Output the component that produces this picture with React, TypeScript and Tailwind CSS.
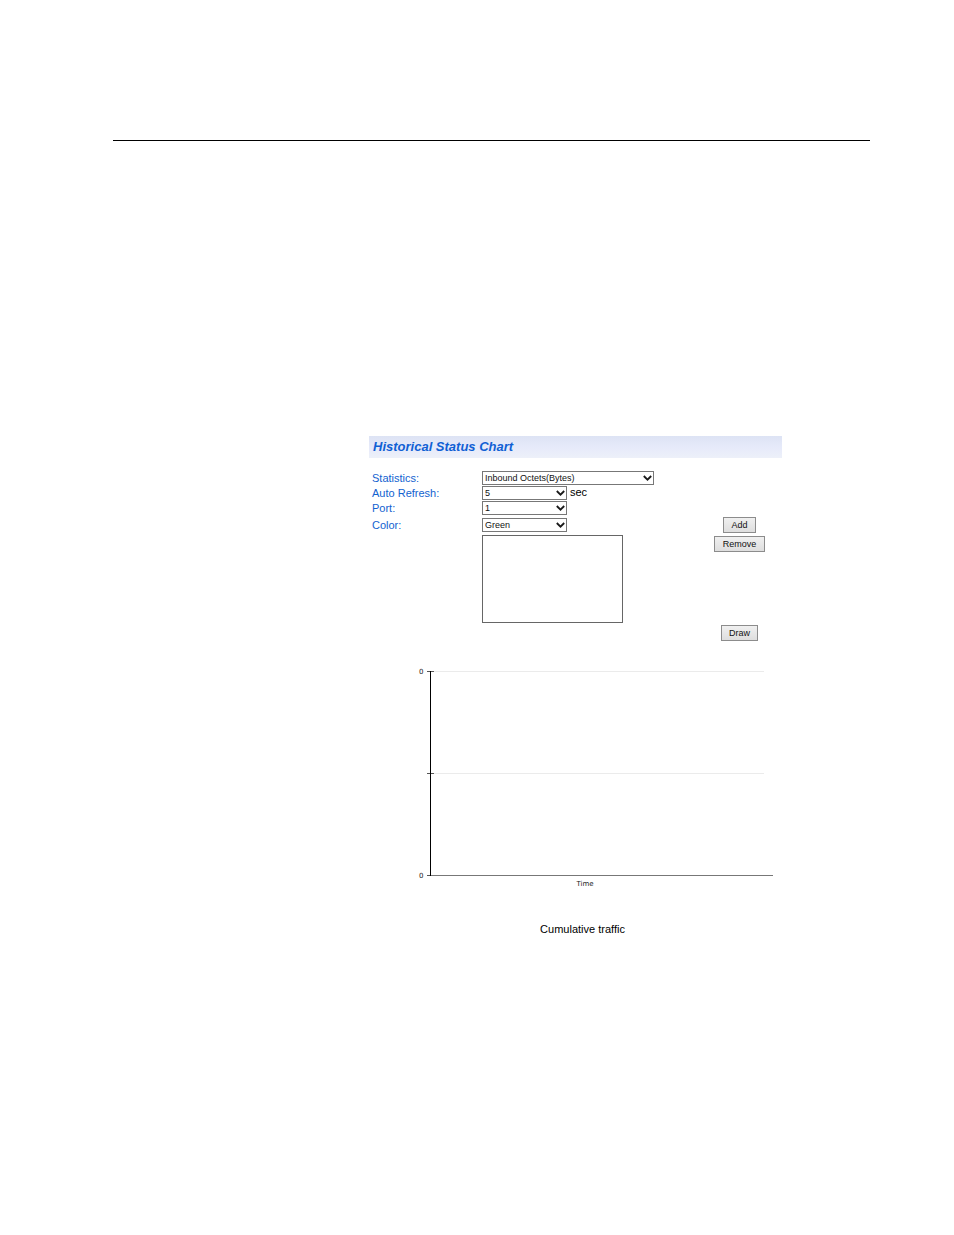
import React, { useState } from 'react';

interface SelectBoxProps {
    id: string;
    options: string[];
    className: string;
}

const SelectBox: React.FC<SelectBoxProps> = ({ id, options, className }) => (
    <div className={`relative h-[14px] ${className}`}>
        <select
            id={id}
            className="block h-full w-full appearance-none border border-[#777777] bg-white pl-[2px] text-[9px] leading-[12px] text-[#111111]"
        >
            {options.map(option => (
                <option key={option}>{option}</option>
            ))}
        </select>
        <svg
            className="pointer-events-none absolute right-[2px] top-[4px]"
            width="9"
            height="7"
            viewBox="0 0 9 7"
            fill="none"
            stroke="#1a1a1a"
            strokeWidth="1.8"
        >
            <path d="M0.8 1 L4.5 4.7 L8.2 1" />
        </svg>
    </div>
);

interface PushButtonProps {
    label: string;
    className: string;
    onClick?: () => void;
}

const PushButton: React.FC<PushButtonProps> = ({ label, className, onClick }) => (
    <button
        type="button"
        onClick={onClick}
        className={`h-[16px] border border-[#8c8c8c] bg-linear-to-b from-[#f0f0f0] to-[#dedede] text-[9px] leading-[14px] text-[#111111] ${className}`}
    >
        {label}
    </button>
);

const TrafficChart = () => (
    <svg width="358" height="230" viewBox="0 0 358 230" role="img" aria-label="Cumulative traffic over time">
        {/* Grid lines */}
        <path d="M18 11.5H349M18 113.5H349" stroke="#ebebeb" />
        {/* Ticks and time axis */}
        <path d="M12 11.5H19M12 113.5H19M12 215.5H19" stroke="#555555" />
        <path d="M16 215.5H358" stroke="#777777" />
        <path d="M15.5 11V216" stroke="#000000" />
        <g className="font-['DejaVu_Sans',sans-serif] text-[7px]" fill="#222222">
            <text x="4" y="14">0</text>
            <text x="4" y="218">0</text>
            <text x="170" y="226" textAnchor="middle">Time</text>
        </g>
    </svg>
);

const App: React.FC = () => {
    const [ports, setPorts] = useState<string[]>([]);

    return (
        <main className="min-h-screen bg-white pt-[140px] pr-[84px] pl-[113px] font-['Liberation_Sans',Arial,sans-serif] text-[11px]">
            <hr className="border-t border-black" />

            <section className="mt-[295px] ml-[256px] w-[413px]">
                <h1 className="h-[22px] bg-linear-to-b from-[#dde3f4] via-[#e6eafa] to-[#edf0f9] pl-1 text-[13px] leading-[22px] font-bold text-[#1060d4] italic">
                    Historical Status Chart
                </h1>

                <form className="mt-[13px] pr-[17px] pl-[3px] text-[#1262d0]">
                    <div className="flex h-[15px]">
                        <label htmlFor="statistics" className="w-[110px] leading-[14px]">Statistics:</label>
                        <SelectBox id="statistics" options={['Inbound Octets(Bytes)']} className="w-[172px]" />
                    </div>
                    <div className="flex h-[15px]">
                        <label htmlFor="refresh" className="w-[110px] leading-[14px]">Auto Refresh:</label>
                        <SelectBox id="refresh" options={['5', '10', '15']} className="w-[85px]" />
                        <span className="ml-[3px] leading-[13px] text-black">sec</span>
                    </div>
                    <div className="flex h-[15px]">
                        <label htmlFor="port" className="w-[110px] leading-[14px]">Port:</label>
                        <SelectBox id="port" options={['1', '2', '3', '4']} className="w-[85px]" />
                    </div>
                    <div className="mt-[1px] flex h-[16px] items-center">
                        <label htmlFor="color" className="w-[110px]">Color:</label>
                        <SelectBox id="color" options={['Green', 'Blue', 'Red']} className="w-[85px]" />
                        <div className="ml-auto flex w-[51px] justify-center">
                            <PushButton label="Add" className="w-[33px]" />
                        </div>
                    </div>
                    <div className="mt-[2px] flex items-start justify-between">
                        <select
                            size={5}
                            aria-label="Selected ports"
                            className="ml-[110px] block h-[88px] w-[141px] border border-[#666666] bg-white text-[9px]"
                        >
                            {ports.map(port => (
                                <option key={port}>{port}</option>
                            ))}
                        </select>
                        <PushButton label="Remove" className="mt-[1px] w-[51px]" onClick={() => setPorts([])} />
                    </div>
                    <div className="mt-[2px] ml-auto flex w-[51px] justify-center">
                        <PushButton label="Draw" className="w-[37px]" />
                    </div>
                </form>

                <figure className="mt-[19px]">
                    <div className="ml-[46px]">
                        <TrafficChart />
                    </div>
                    <figcaption className="mt-[32px] pl-[14px] text-center leading-[14px] text-black">
                        Cumulative traffic
                    </figcaption>
                </figure>
            </section>
        </main>
    );
};

export default App;
